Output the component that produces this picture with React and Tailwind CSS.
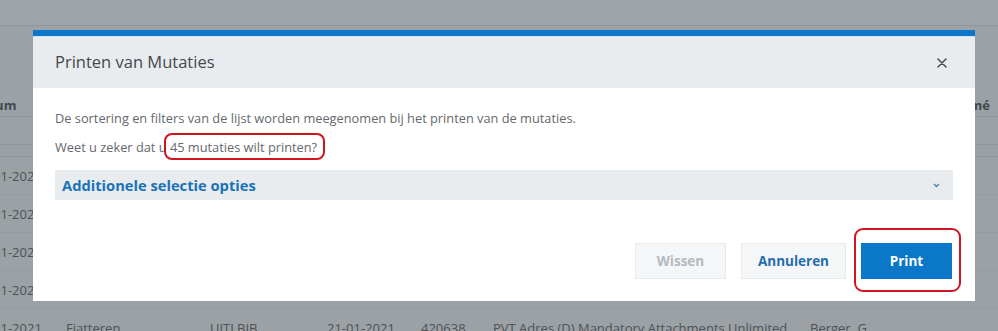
import React from 'react';

const rows = [
  ['21-01-2021', '', '', '', '', '', ''],
  ['21-01-2021', '', '', '', '', '', ''],
  ['21-01-2021', '', '', '', '', '', ''],
  ['21-01-2021', '', '', '', '', '', ''],
  ['21-01-2021', 'Fiatteren', 'UITLBIB', '21-01-2021', '420638', 'PVT Adres (D) Mandatory Attachments Unlimited', 'Berger, G.'],
];

const colWidths = ['w-[92px]', 'w-[144px]', 'w-[117px]', 'w-[94px]', 'w-[72px]', 'w-[317px]', 'w-[150px]'];

function BackgroundTable() {
  return (
    <div className="flex flex-col text-[13px] text-[#4d5256]">
      <div className="h-[26px] border-b border-[#8f9599] bg-[#9ea4a8]" />
      <div className="h-[64px]" />
      {/* header row */}
      <div className="h-[27px] pt-[5px] flex items-center justify-between border-b border-[#8f9599] font-bold text-[#43484b]">
        <span className="-ml-[28px]">Datum</span>
        <span className="pr-[8px]">Resumé</span>
      </div>
      <div className="h-[28px] border-b border-[#8f9599]" />
      <div className="h-[12px] border-b border-[#8f9599]" />
      {rows.map((r, i) => (
        <div key={i} className="h-[38px] shrink-0 pt-[3px] flex items-center border-b border-[#959b9f] -ml-[26px]">
          {r.map((c, j) => (
            <div key={j} className={`${colWidths[j]} shrink-0 whitespace-nowrap`}>{c}</div>
          ))}
        </div>
      ))}
    </div>
  );
}

function Dialog() {
  return (
    <div className="absolute left-[33px] top-[30px] w-[942px] h-[271px] bg-white flex flex-col">
      <div className="h-[6px] bg-[#0a77c9]" />
      <div className="h-px bg-[#cfe4f3]" />
      <div className="h-[51px] bg-[#e9ecef] flex items-center justify-between pl-[22px] pr-[28px]">
        <h2 className="text-[16.5px] text-[#44484c] leading-none">Printen van Mutaties</h2>
        <svg width="10" height="10" viewBox="0 0 10 10" className="text-[#4b5055]">
          <path d="M1 1 L9 9 M9 1 L1 9" stroke="currentColor" strokeWidth="1.6" strokeLinecap="round" />
        </svg>
      </div>
      <div className="px-[22px] pt-[21px] text-[12.8px] leading-[18px] text-[#65696d]">
        <p>De sortering en filters van de lijst worden meegenomen bij het printen van de mutaties.</p>
        <p className="mt-[11px]">Weet u zeker dat u 45 mutaties wilt printen?</p>
        <div className="mt-[14px] h-[30px] bg-[#e9ecef] flex items-center justify-between pl-[7px] pr-[13px]">
          <span className="text-[14.7px] font-bold text-[#1a72b9]">Additionele selectie opties</span>
          <svg width="7" height="5" viewBox="0 0 7 5">
            <path d="M1 1 L3.5 3.5 L6 1" fill="none" stroke="#5a7a99" strokeWidth="1.3" />
          </svg>
        </div>
      </div>
      <div className="mt-[43px] px-[23px] flex justify-end gap-[15px] text-[13.5px] font-bold">
        <button className="h-[36px] w-[91px] bg-[#f5f6f7] border border-[#e7eaec] text-[#b2bac1]">Wissen</button>
        <button className="h-[36px] w-[105px] bg-[#f5f6f7] border border-[#e7eaec] text-[#1f6db0]">Annuleren</button>
        <button className="h-[36px] w-[91px] bg-[#0a77c9] text-white">Print</button>
      </div>
    </div>
  );
}

export default function App() {
  return (
    <div
      className="relative w-[998px] h-[331px] overflow-hidden bg-[#9ba1a5]"
      style={{ fontFamily: '"Open Sans", sans-serif' }}
    >
      <BackgroundTable />
      <Dialog />
      {/* red annotation marks */}
      <div className="absolute left-[164px] top-[133px] w-[161px] h-[27px] border-2 border-[#d0151f] rounded-[8px]" />
      <div className="absolute left-[854px] top-[228px] w-[107px] h-[64px] border-2 border-[#d0151f] rounded-[9px]" />
    </div>
  );
}
